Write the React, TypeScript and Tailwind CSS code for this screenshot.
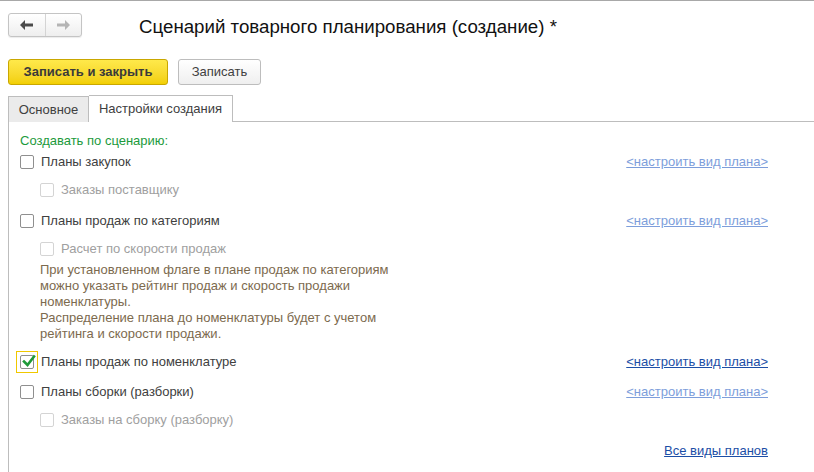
import React from 'react';

const font = { fontFamily: '"Liberation Sans", Arial, sans-serif' };

const Box: React.FC<{ disabled?: boolean; checked?: boolean }> = ({ disabled, checked }) => (
  <span
    className={`relative inline-block w-[14px] h-[14px] rounded-[2px] border bg-white shrink-0 ${
      disabled ? 'border-[#d4d4d4]' : 'border-[#8f8f8f]'
    }`}
  >
    {checked && (
      <svg className="absolute left-[1px] top-[-2px]" width="14" height="14" viewBox="0 0 14 14">
        <path d="M2 7.5 L5.5 11 L12 2.5" fill="none" stroke="#1f9a3a" strokeWidth="2.6" strokeLinecap="square" />
      </svg>
    )}
  </span>
);

const Row: React.FC<{
  label: string;
  h: string;
  link?: 'on' | 'off';
  checked?: boolean;
  focused?: boolean;
}> = ({ label, h, link, checked, focused }) => (
  <div className={`flex items-center ${h}`}>
    <div className="w-[22px] h-[22px] flex items-center justify-center ml-[-4px]">
      <span className={`flex items-center justify-center w-[22px] h-[22px] ${focused ? 'border border-[#f0c800]' : ''}`}>
        <Box checked={checked} />
      </span>
    </div>
    <span className="ml-[3px] text-[13px] text-[#404040]">{label}</span>
    {link && (
      <a
        className={`ml-auto mr-[46px] text-[13px] underline ${
          link === 'on' ? 'text-[#1b4ea6]' : 'text-[#7d9edb]'
        }`}
      >
        &lt;настроить вид плана&gt;
      </a>
    )}
  </div>
);

const SubRow: React.FC<{ label: string; h: string }> = ({ label, h }) => (
  <div className={`flex items-center pl-[20px] ${h}`}>
    <Box disabled />
    <span className="ml-[7px] text-[13px] text-[#a0a0a0]">{label}</span>
  </div>
);

export default function App() {
  return (
    <div className="w-[814px] h-[472px] bg-white border-t border-[#a8a8a8] overflow-hidden" style={font}>
      <div className="flex items-center h-[24px] mt-[12px] pl-[8px]">
        <div className="flex w-[74px] h-[24px] border border-[#c4c4c4] rounded-[3px] bg-gradient-to-b from-white to-[#eeeeee] shadow-[0_1px_1px_rgba(0,0,0,0.08)]">
          <span className="flex-1 flex items-center justify-center border-r border-[#d4d4d4]">
            <svg width="14" height="10" viewBox="0 0 14 10">
              <path d="M0 5 L5 0 L5 3.5 L13 3.5 L13 6.5 L5 6.5 L5 10 Z" fill="#4a4a4a" />
            </svg>
          </span>
          <span className="flex-1 flex items-center justify-center">
            <svg width="14" height="10" viewBox="0 0 14 10">
              <path d="M14 5 L9 0 L9 3.5 L1 3.5 L1 6.5 L9 6.5 L9 10 Z" fill="#b4b4b4" />
            </svg>
          </span>
        </div>
        <h1 className="ml-[57px] mt-[4px] text-[18.7px] text-[#111]">Сценарий товарного планирования (создание) *</h1>
      </div>

      <div className="flex gap-[10px] pl-[8px] mt-[22px]">
        <button className="w-[160px] h-[26px] rounded-[3px] border border-[#c9a700] bg-gradient-to-b from-[#ffe94a] to-[#f2cf00] text-[13px] font-bold text-[#3a3a3a]">
          Записать и закрыть
        </button>
        <button className="w-[83px] h-[26px] rounded-[3px] border border-[#bdbdbd] bg-gradient-to-b from-white to-[#efefef] text-[13px] text-[#404040]">
          Записать
        </button>
      </div>

      <div className="flex items-end mt-[10px] pl-[8px]">
        <div className="h-[26px] w-[81px] flex items-center justify-center bg-[#ebebeb] border border-[#bdbdbd] border-b-0 text-[13px] text-[#404040]">
          Основное
        </div>
        <div className="h-[27px] w-[144px] flex items-center justify-center bg-white border border-[#bdbdbd] border-l-0 border-b-0 text-[13px] text-[#404040]">
          Настройки создания
        </div>
        <div className="flex-1 border-b border-[#bdbdbd]" />
      </div>

      <div className="ml-[8px] border-l border-[#bdbdbd] h-[400px] pl-[11px] pt-[9px]">
        <div className="text-[13px] text-[#1c9a3c] h-[20px] leading-[20px]">Создавать по сценарию:</div>
        <Row h="h-[22px]" label="Планы закупок" link="off" />
        <SubRow h="h-[34px]" label="Заказы поставщику" />
        <Row h="h-[28px]" label="Планы продаж по категориям" link="off" />
        <SubRow h="h-[28px]" label="Расчет по скорости продаж" />
        <div className="pl-[20px] text-[13px] leading-[16px] text-[#7c6a4e] mt-[-1px] mb-[1px]">
          <div>При установленном флаге в плане продаж по категориям</div>
          <div>можно указать рейтинг продаж и скорость продажи</div>
          <div>номенклатуры.</div>
          <div>Распределение плана до номенклатуры будет с учетом</div>
          <div>рейтинга и скорости продажи.</div>
        </div>
        <Row h="h-[38px]" label="Планы продаж по номенклатуре" link="on" checked focused />
        <Row h="h-[22px]" label="Планы сборки (разборки)" link="off" />
        <SubRow h="h-[34px]" label="Заказы на сборку (разборку)" />
        <div className="flex items-center justify-end mr-[46px] h-[28px]">
          <a className="text-[13px] underline text-[#1b4ea6]">Все виды планов</a>
        </div>
      </div>
    </div>
  );
}
